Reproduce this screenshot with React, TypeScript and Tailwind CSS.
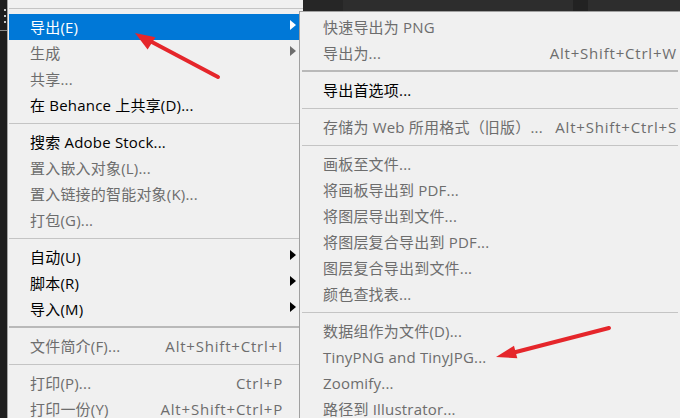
type Item =
  | { kind: "item"; label: string; shortcut?: string; disabled?: boolean; arrow?: boolean; active?: boolean }
  | { kind: "sep"; thick?: boolean };

const it = (label: string, opts: Partial<{ shortcut: string; disabled: boolean; arrow: boolean; active: boolean }> = {}): Item => ({
  kind: "item",
  label,
  ...opts,
});
const sep = (thick = false): Item => ({ kind: "sep", thick });

const leftItems: Item[] = [
  sep(),
  it("导出(E)", { arrow: true, active: true }),
  it("生成", { arrow: true, disabled: true }),
  it("共享...", { disabled: true }),
  it("在 Behance 上共享(D)..."),
  sep(),
  it("搜索 Adobe Stock..."),
  it("置入嵌入对象(L)...", { disabled: true }),
  it("置入链接的智能对象(K)...", { disabled: true }),
  it("打包(G)...", { disabled: true }),
  sep(),
  it("自动(U)", { arrow: true }),
  it("脚本(R)", { arrow: true }),
  it("导入(M)", { arrow: true }),
  sep(true),
  it("文件简介(F)...", { shortcut: "Alt+Shift+Ctrl+I", disabled: true }),
  sep(),
  it("打印(P)...", { shortcut: "Ctrl+P", disabled: true }),
  it("打印一份(Y)", { shortcut: "Alt+Shift+Ctrl+P", disabled: true }),
];

const subItems: Item[] = [
  it("快速导出为 PNG", { disabled: true }),
  it("导出为...", { shortcut: "Alt+Shift+Ctrl+W", disabled: true }),
  sep(true),
  it("导出首选项..."),
  sep(),
  it("存储为 Web 所用格式（旧版）...", { shortcut: "Alt+Shift+Ctrl+S", disabled: true }),
  sep(),
  it("画板至文件...", { disabled: true }),
  it("将画板导出到 PDF...", { disabled: true }),
  it("将图层导出到文件...", { disabled: true }),
  it("将图层复合导出到 PDF...", { disabled: true }),
  it("图层复合导出到文件...", { disabled: true }),
  it("颜色查找表...", { disabled: true }),
  sep(),
  it("数据组作为文件(D)...", { disabled: true }),
  it("TinyPNG and TinyJPG...", { disabled: true }),
  it("Zoomify...", { disabled: true }),
  it("路径到 Illustrator...", { disabled: true }),
];

function Separator({ thick }: { thick?: boolean }) {
  return (
    <div className={thick ? "h-[11px] pt-[4px]" : "h-[11px] pt-[5px]"}>
      <div className={thick ? "h-[2px] bg-[#b9b9b9]" : "h-px bg-[#c4c4c4]"} />
    </div>
  );
}

function Row({ item, side }: { item: Extract<Item, { kind: "item" }>; side: "left" | "sub" }) {
  const color = item.active ? "text-white" : item.disabled ? "text-[#6d6d6d]" : "text-black";
  return (
    <div
      className={`relative flex h-[26px] items-center justify-between ${
        side === "left" ? "pl-[21px] pr-[16px]" : "pl-[23px] pr-[3px]"
      } ${item.active ? "bg-[#0078d7]" : ""} ${color}`}
    >
      <span className="whitespace-nowrap tracking-[0.2px]">{item.label}</span>
      {item.shortcut && <span className="whitespace-nowrap tracking-[0.8px]">{item.shortcut}</span>}
      {item.arrow && (
        <svg className="absolute right-[3px] top-[6px]" width="6" height="10" viewBox="0 0 6 10">
          <path
            d="M0 0 L6 5 L0 10 Z"
            fill={item.active ? "#ffffff" : item.disabled ? "#6d6d6d" : "#000000"}
          />
        </svg>
      )}
    </div>
  );
}

function Menu({ items, side }: { items: Item[]; side: "left" | "sub" }) {
  return (
    <>
      {items.map((item, i) =>
        item.kind === "sep" ? (
          <div key={i} className={side === "left" ? "" : "mx-[2px]"}>
            <Separator thick={item.thick} />
          </div>
        ) : (
          <Row key={i} item={item} side={side} />
        ),
      )}
    </>
  );
}

export default function App() {
  return (
    <div className="relative flex h-[418px] w-[680px] overflow-hidden bg-[#2d2d2d] font-['Open_Sans','Noto_Sans_CJK_SC',sans-serif] text-[15px]">
      {/* dark tool strip on the far left */}
      <div className="flex w-[7px] shrink-0 flex-col bg-[#1e1e1e]">
        <div className="ml-[4px] mt-[9px] flex flex-col gap-[4px]">
          <div className="h-[2px] w-[2px] bg-[#c8c8c8]" />
          <div className="h-[2px] w-[2px] bg-[#c8c8c8]" />
          <div className="h-[2px] w-[2px] bg-[#c8c8c8]" />
        </div>
        <div className="mt-[7px] h-px bg-[#8c8c8c]" />
      </div>

      {/* main File menu */}
      <div className="w-[292px] shrink-0 border-l border-[#a3a3a3] bg-[#f0f0f0] pt-[3px]">
        <div className="pl-[1px]">
          <Menu items={leftItems} side="left" />
        </div>
      </div>

      {/* export submenu */}
      <div className="flex min-w-0 flex-1 flex-col">
        <div className="flex h-[11px] shrink-0">
          <div className="w-[4px] bg-[#f0f0f0] pt-[8px]">
            <div className="h-px bg-[#c4c4c4]" />
          </div>
          <div className="w-[40px] bg-[#262626]" />
          <div className="w-[230px] bg-[#2d2d2d]" />
          <div className="w-[15px] bg-[#222222]" />
          <div className="flex-1 bg-[#2d2d2d]" />
        </div>
        <div className="flex-1 border-l border-t border-[#a0a0a0] bg-[#f0f0f0] pt-[2px]">
          <Menu items={subItems} side="sub" />
        </div>
      </div>

      {/* red annotation arrows */}
      <svg className="pointer-events-none absolute left-0 top-0" width="680" height="418" viewBox="0 0 680 418">
        <line x1="218" y1="77" x2="150" y2="41" stroke="#e5262b" strokeWidth="4" strokeLinecap="round" />
        <path d="M135 33 L155.5 37.2 L147.6 49.4 Z" fill="#e5262b" />
        <line x1="609" y1="328" x2="512" y2="353" stroke="#e5262b" strokeWidth="4" strokeLinecap="round" />
        <path d="M496 357 L514 345.7 L517.3 358.3 Z" fill="#e5262b" />
      </svg>
    </div>
  );
}
